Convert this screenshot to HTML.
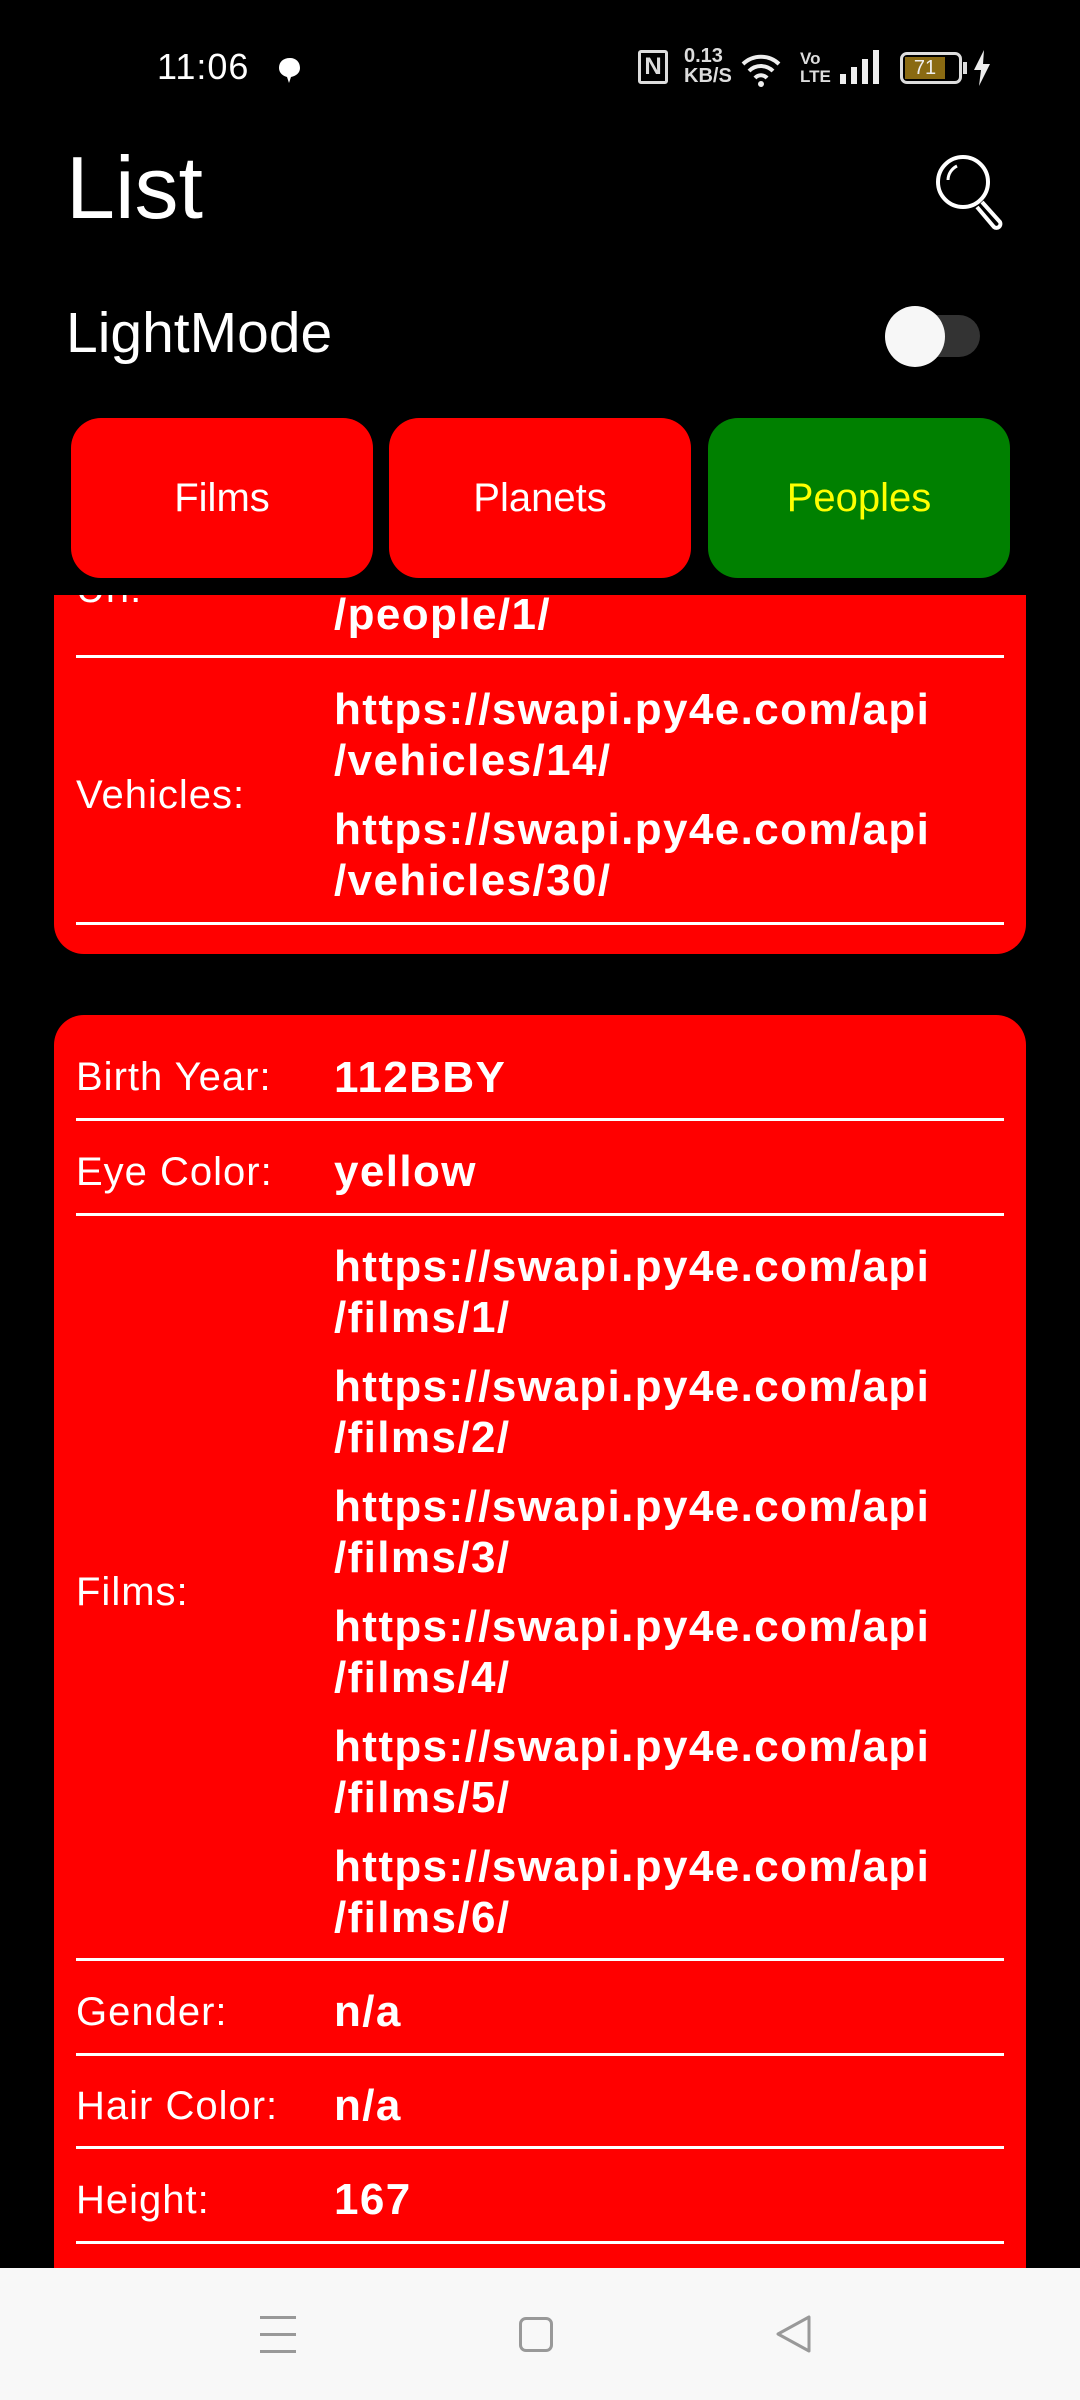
<!DOCTYPE html>
<html><head><meta charset="utf-8"><style>
*{margin:0;padding:0;box-sizing:border-box}
body{width:1080px;height:2400px;background:#000;position:relative;overflow:hidden;font-family:"Liberation Sans",sans-serif;color:#fff}
.abs{position:absolute}
.btn{position:absolute;top:418px;height:160px;border-radius:30px;background:#f00;color:#fff;font-size:40px;display:flex;align-items:center;justify-content:center;padding-top:0}
#scroll{position:absolute;left:0;top:595px;width:1080px;height:1673px;overflow:hidden;background:#000}
.card{position:absolute;left:54px;width:972px;background:#f00;border-radius:30px}
.row{position:absolute;left:22px;width:928px;border-bottom:3px solid #fff;display:flex;align-items:center;padding-top:10px}
.lab{width:258px;font-size:40px;letter-spacing:1px;white-space:nowrap}
.vals{font-size:44px;font-weight:bold;letter-spacing:1.4px;white-space:nowrap}
.v{line-height:51px}
.item+.item{margin-top:18px}
</style></head><body>
<div class="abs" style="left:157px;top:46px;font-size:36px;letter-spacing:1px">11:06</div>
<svg class="abs" style="left:276px;top:56px" width="28" height="28" viewBox="0 0 28 28"><path d="M14 2C7 2 3 6 3 12c0 5 4 8 8 9l2 6 2-6c5-1 9-4 9-9 0-6-4-10-10-10z" fill="#fff"/></svg>
<div class="abs" style="left:638px;top:50px;width:30px;height:34px;border:3px solid #ddd;border-radius:3px;font-size:24px;font-weight:bold;line-height:28px;text-align:center;color:#ddd">N</div>
<div class="abs" style="left:684px;top:46px;font-size:20px;line-height:20px;font-weight:bold;color:#ddd">0.13<br>KB/S</div>
<svg class="abs" style="left:740px;top:50px" width="42" height="38" viewBox="0 0 42 38"><path d="M3 14a26 26 0 0 1 36 0M9 21a17 17 0 0 1 24 0M15 28a8 8 0 0 1 12 0" stroke="#eee" stroke-width="4" fill="none"/><circle cx="21" cy="34" r="3" fill="#eee"/></svg>
<div class="abs" style="left:800px;top:50px;font-size:17px;line-height:18px;font-weight:bold;color:#ddd">Vo<br>LTE</div>
<div class="abs" style="left:840px;top:74px;width:6px;height:10px;background:#eee"></div>
<div class="abs" style="left:851px;top:67px;width:6px;height:17px;background:#eee"></div>
<div class="abs" style="left:862px;top:59px;width:6px;height:25px;background:#eee"></div>
<div class="abs" style="left:873px;top:50px;width:6px;height:34px;background:#eee"></div>
<div class="abs" style="left:900px;top:52px;width:62px;height:32px;border:3px solid #ddd;border-radius:7px"></div>
<div class="abs" style="left:905px;top:57px;width:40px;height:22px;background:#8a6a12;color:#eee;font-size:20px;line-height:22px;text-align:center">71</div>
<div class="abs" style="left:963px;top:62px;width:4px;height:12px;background:#ddd"></div>
<svg class="abs" style="left:972px;top:50px" width="20" height="36" viewBox="0 0 20 36"><path d="M12 0L2 20h7l-2 16 11-22h-7z" fill="#eee"/></svg>
<div class="abs" style="left:66px;top:138px;font-size:88px;line-height:100px">List</div>
<svg class="abs" style="left:930px;top:150px" width="82" height="82" viewBox="0 0 82 82"><circle cx="33" cy="32" r="25" stroke="#fff" stroke-width="4" fill="none"/><path d="M18 30a16 16 0 0 1 9-14" stroke="#fff" stroke-width="3" fill="none"/><path d="M52 52l18 20a4 4 0 0 1-6 5L47 57" stroke="#fff" stroke-width="4" fill="none"/></svg>
<div class="abs" style="left:66px;top:298px;font-size:57px;line-height:70px">LightMode</div>
<div class="abs" style="left:890px;top:315px;width:90px;height:42px;border-radius:21px;background:#333"></div>
<div class="abs" style="left:885px;top:306px;width:60px;height:61px;border-radius:50%;background:#f7f7f7"></div>
<div class="btn" style="left:71px;width:302px">Films</div>
<div class="btn" style="left:389px;width:302px">Planets</div>
<div class="btn" style="left:708px;width:302px;background:#008000;color:#ff0">Peoples</div>
<div id="scroll">
 <div class="card" style="top:-500px;height:859px">
  <div class="row" style="top:418px;height:145px"><div class="lab">Url:</div><div class="vals"><div class="item"><div class="v">https://swapi.py4e.com/api</div><div class="v">/people/1/</div></div></div></div>
  <div class="row" style="top:563px;height:267px"><div class="lab">Vehicles:</div><div class="vals"><div class="item"><div class="v">https://swapi.py4e.com/api</div><div class="v">/vehicles/14/</div></div><div class="item"><div class="v">https://swapi.py4e.com/api</div><div class="v">/vehicles/30/</div></div></div></div>
 </div>
 <div class="card" style="top:420px;height:1400px">
  <div class="row" style="top:12px;height:94px"><div class="lab">Birth Year:</div><div class="vals">112BBY</div></div>
  <div class="row" style="top:106px;height:95px"><div class="lab">Eye Color:</div><div class="vals">yellow</div></div>
  <div class="row" style="top:201px;height:745px"><div class="lab">Films:</div><div class="vals">
   <div class="item"><div class="v">https://swapi.py4e.com/api</div><div class="v">/films/1/</div></div>
   <div class="item"><div class="v">https://swapi.py4e.com/api</div><div class="v">/films/2/</div></div>
   <div class="item"><div class="v">https://swapi.py4e.com/api</div><div class="v">/films/3/</div></div>
   <div class="item"><div class="v">https://swapi.py4e.com/api</div><div class="v">/films/4/</div></div>
   <div class="item"><div class="v">https://swapi.py4e.com/api</div><div class="v">/films/5/</div></div>
   <div class="item"><div class="v">https://swapi.py4e.com/api</div><div class="v">/films/6/</div></div>
  </div></div>
  <div class="row" style="top:946px;height:95px"><div class="lab">Gender:</div><div class="vals">n/a</div></div>
  <div class="row" style="top:1041px;height:93px"><div class="lab">Hair Color:</div><div class="vals">n/a</div></div>
  <div class="row" style="top:1134px;height:95px"><div class="lab">Height:</div><div class="vals">167</div></div>
 </div>
</div>
<div class="abs" style="left:0;top:2268px;width:1080px;height:132px;background:#f8f8f8"></div>
<div class="abs" style="left:260px;top:2316px;width:36px;height:3px;background:#999"></div>
<div class="abs" style="left:260px;top:2333px;width:36px;height:3px;background:#999"></div>
<div class="abs" style="left:260px;top:2350px;width:36px;height:3px;background:#999"></div>
<div class="abs" style="left:519px;top:2317px;width:34px;height:35px;border:3px solid #999;border-radius:7px"></div>
<svg class="abs" style="left:774px;top:2314px" width="40" height="40" viewBox="0 0 40 40"><path d="M35 3v34L4 20z" stroke="#999" stroke-width="3" fill="none" stroke-linejoin="round"/></svg>
</body></html>
